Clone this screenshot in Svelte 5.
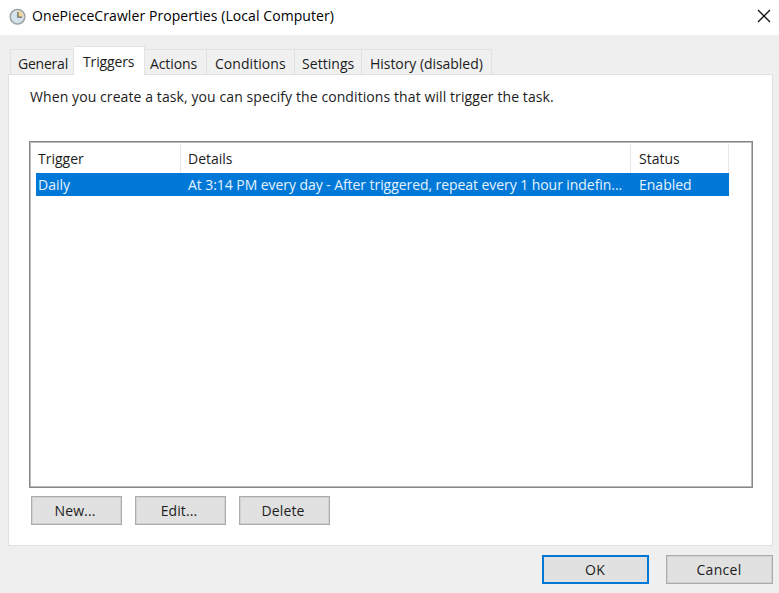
<script>
  const tabs = [
    { label: 'General', width: 64, pad: 7, space: -0.22 },
    { label: 'Triggers', width: 71, pad: 9, space: -0.15, active: true },
    { label: 'Actions', width: 62, pad: 5, space: -0.1 },
    { label: 'Conditions', width: 88, pad: 8, space: 0.05 },
    { label: 'Settings', width: 67, pad: 7, space: 0.05 },
    { label: 'History (disabled)', width: 130, pad: 8, space: -0.05 }
  ];
  const actions = ['New...', 'Edit...', 'Delete'];
</script>

<div class="window">
  <header>
    <svg class="clock" width="18" height="18" viewBox="0 0 18 18">
      <circle cx="8.5" cy="8.7" r="7.4" fill="#bcc8cf" stroke="#9a9fa2" stroke-width="1.3" />
      <circle cx="8.5" cy="8.7" r="5.9" fill="#d3e3ee" stroke="#dfe5e8" stroke-width=".8" />
      <path d="M8.5 8.7V2.9A5.8 5.8 0 0 1 14.3 8.7Z" fill="#f3d797" />
      <path d="M8.9 4V9.2H13" fill="none" stroke="#6b6860" stroke-width="1.3" />
    </svg>
    <h1>OnePieceCrawler Properties (Local Computer)</h1>
    <svg class="close" width="14" height="14" viewBox="0 0 14 14">
      <path d="M1 1L13 13M13 1L1 13" stroke="#111" stroke-width="1.25" />
    </svg>
  </header>

  <nav>
    {#each tabs as tab}
      <div class="tab" class:active={tab.active} style="width:{tab.width}px;padding-left:{tab.pad}px;letter-spacing:{tab.space}px">{tab.label}</div>
    {/each}
  </nav>

  <main>
    <p>When you create a task, you can specify the conditions that will trigger the task.</p>
    <section class="list">
      <div class="row head">
        <span class="c1">Trigger</span><span class="c2">Details</span><span class="c3">Status</span>
      </div>
      <div class="row selected">
        <span class="c1">Daily</span><span class="c2"><span class="detail">At 3:14 PM every day - After triggered, repeat every 1 hour indefin...</span></span><span class="c3">Enabled</span>
      </div>
    </section>
    <div class="actions">
      {#each actions as action}<button>{action}</button>{/each}
    </div>
  </main>

  <footer>
    <button class="primary">OK</button>
    <button>Cancel</button>
  </footer>
</div>

<style>
  .window { width: 779px; height: 593px; background: #efefef; display: flex; flex-direction: column; overflow: hidden; box-sizing: border-box; font: 14px/20px "Open Sans", "Noto Sans", sans-serif; color: #1c1c1c; white-space: nowrap; }
  .window * { box-sizing: border-box; }
  header { height: 35px; flex: none; background: #fff; display: flex; align-items: flex-start; padding: 8px 8px 0 9px; }
  h1 { margin: -2px 0 0 5px; font-size: 14px; font-weight: 400; line-height: 20px; letter-spacing: .08px; color: #000; }
  .close { margin: 1px 0 0 auto; }
  nav { height: 39px; flex: none; display: flex; align-items: flex-end; padding-left: 10px; }
  .tab { height: 25px; padding-top: 4px; flex: none; background: #f0f0f0; border-top: 1px solid #e2e2e2; border-right: 1px solid #e2e2e2; }
  .tab:first-child { border-left: 1px solid #e2e2e2; }
  .tab.active { height: 29px; margin-bottom: -1px; padding-top: 5px; background: #fff; z-index: 1; }
  main { width: 765px; height: 472px; flex: none; margin-left: 8px; background: #fff; border: 1px solid #e0e0e0; padding: 12px 20px 0; }
  p { margin: 0 0 34px; padding-left: 1px; line-height: 20px; letter-spacing: .09px; }
  .list { height: 347px; width: 724px; border: 1px solid #85878a; box-shadow: inset 0 0 0 1px #b9babc; padding: 2px 0 0 6px; }
  .row { display: flex; width: 693px; }
  .row > span { padding-left: 8px; flex: none; }
  .c1 { width: 145px; }
  .c2 { width: 450px; }
  .c3 { width: 98px; }
  .row > .c1 { padding-left: 2px; }
  .row > .c2 { padding-left: 7px; }
  .head { height: 29px; line-height: 30px; }
  .head span { border-right: 1px solid #e7e7e7; }
  .selected { height: 23px; line-height: 23px; background: #0078d7; color: #e5f3ff; }
  .detail { letter-spacing: -.065px; }
  .actions { display: flex; gap: 13px; padding: 8px 0 0 2px; }
  button { width: 91px; height: 29px; margin: 0; padding: 0 3px 0 0; border: 1px solid #acacac; box-shadow: inset 0 0 0 1px #d0d0d0; background: #e1e1e1; font: inherit; color: #1c1c1c; letter-spacing: .1px; }
  footer { display: flex; justify-content: flex-end; gap: 17px; padding: 9px 6px 0 0; }
  footer button { width: 107px; padding: 0 1px 0 0; letter-spacing: .3px; }
  .primary { border: 2px solid #0078d7; box-shadow: none; }
</style>
